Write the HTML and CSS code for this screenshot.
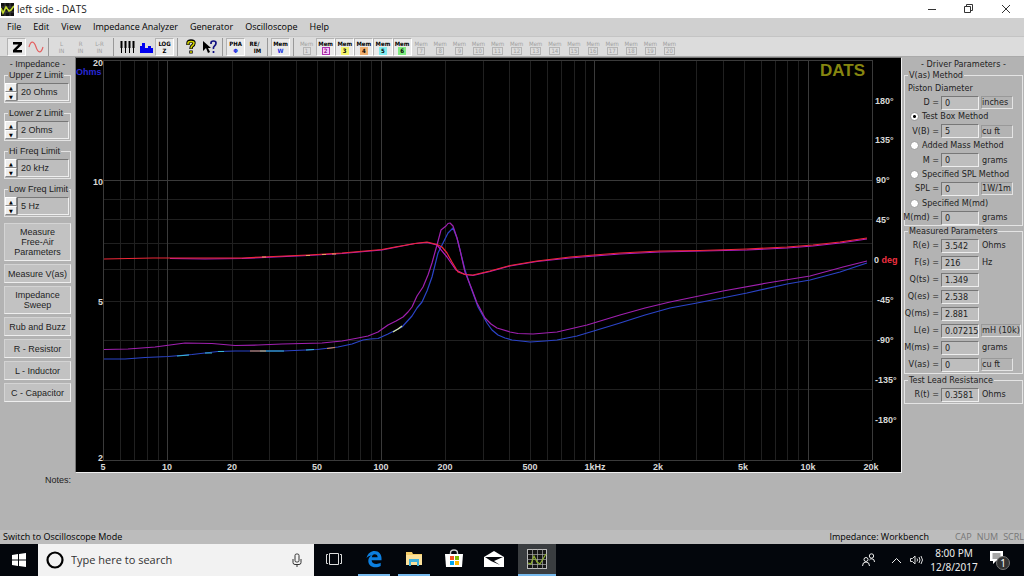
FILE: index.html
```html
<!DOCTYPE html>
<html lang="en">
<head>
<meta charset="utf-8">
<title>left side - DATS</title>
<link rel="stylesheet" href="styles.css">
</head>
<body>
<header class="titlebar">
  <svg class="app-icon" width="13" height="13" viewBox="0 0 13 13"><rect width="13" height="13" fill="#111"/><path d="M0 4h13M0 9h13M4 0v13M9 0v13" stroke="#444" stroke-width="1"/><path d="M0 5l2 5 3-6 3 4 2-1 3-4" fill="none" stroke="#c4dc30" stroke-width="1.6"/></svg>
  <h1 class="window-title">left side - DATS</h1>
  <div class="window-controls">
    <button aria-label="Minimize"><svg width="10" height="10" viewBox="0 0 10 10"><path d="M1 5.500h8" stroke="#333"/></svg></button>
    <button aria-label="Restore"><svg width="10" height="10" viewBox="0 0 10 10"><path d="M.5 2.500h6v6h-6zM2.500 2.500v-2h6v6h-2" fill="none" stroke="#333"/></svg></button>
    <button aria-label="Close"><svg width="10" height="10" viewBox="0 0 10 10"><path d="M1 1l8 8M9 1l-8 8" stroke="#333"/></svg></button>
  </div>
</header>
<nav class="menubar">
  <button>File</button><button>Edit</button><button>View</button><button>Impedance Analyzer</button><button>Generator</button><button>Oscilloscope</button><button>Help</button>
</nav>
<div class="toolbar">
  <div class="tool-group">
    <button class="tool pressed" aria-label="Impedance"><svg width="16" height="16" viewBox="0 0 16 16"><path d="M4 3h9v2.500L7.500 11H13v2.500H4V11l5.500-5.500H4z" fill="#000"/></svg></button>
    <button class="tool" aria-label="Oscilloscope"><svg width="16" height="16" viewBox="0 0 16 16"><path d="M1 8C3 1 6 2 8 8s5 7 7 0" fill="none" stroke="#e46060" stroke-width="1.200"/></svg></button>
  </div>
  <div class="tool-group inputs">
    <button class="tool off"><span>L</span><span>IN</span></button>
    <button class="tool off"><span>R</span><span>IN</span></button>
    <button class="tool off"><span>L-R</span><span>IN</span></button>
  </div>
  <div class="tool-group">
    <button class="tool" aria-label="Piano keys"><svg width="16" height="16" viewBox="0 0 16 16"><path d="M2.500 2v12M6.500 2v12M10.500 2v12M14.500 2v12" stroke="#000"/><path d="M2.500 2v7M6.500 2v7M10.500 2v7M14.500 2v7" stroke="#000" stroke-width="2"/></svg></button>
    <button class="tool" aria-label="Bars"><svg width="16" height="16" viewBox="0 0 16 16"><path d="M2 14V7h2V4h3v5h3V7h3v2h2v5z" fill="#0000f0"/></svg></button>
    <button class="tool pressed"><span>LOG</span><span>Z</span></button>
  </div>
  <div class="tool-group">
    <button class="tool" aria-label="Help"><svg width="16" height="16" viewBox="0 0 16 16"><path d="M5 6V4q0-2 3-2t3 2q0 2-2 3-1 1-1 3M8 11.500v3" fill="none" stroke="#000" stroke-width="3.400"/><path d="M5 5.500V4q0-1.500 3-1.500t3 1.500q0 2-2 3-1 1-1 2.500M8 12v2" fill="none" stroke="#d8d800" stroke-width="1.500"/></svg></button>
    <button class="tool" aria-label="Context help"><svg width="16" height="16" viewBox="0 0 16 16"><path d="M1 2v10l3-3 2 5 2-1-2-4h3z" fill="#000"/><path d="M9 5V4q0-2 2.500-2T14 4q0 2-1.500 3t-1 3M11.500 12v2" fill="none" stroke="#101080" stroke-width="1.700"/></svg></button>
  </div>
  <div class="tool-group">
    <button class="tool pressed"><span>PHA</span><span class="blue">Φ</span></button>
    <button class="tool"><span>RE/</span><span class="shift">IM</span></button>
  </div>
  <div class="tool-group">
    <button class="tool pressed"><span>Mem</span><span class="blue">W</span></button>
  </div>
  <div class="memories">
    <button class="tool off"><span>Mem</span><span class="slot">1</span></button>
    <button class="tool pressed"><span>Mem</span><span class="slot m2">2</span></button>
    <button class="tool pressed"><span>Mem</span><span class="slot m3">3</span></button>
    <button class="tool pressed"><span>Mem</span><span class="slot m4">4</span></button>
    <button class="tool pressed"><span>Mem</span><span class="slot m5">5</span></button>
    <button class="tool pressed"><span>Mem</span><span class="slot m6">6</span></button>
    <button class="tool off"><span>Mem</span><span class="slot">7</span></button>
    <button class="tool off"><span>Mem</span><span class="slot">8</span></button>
    <button class="tool off"><span>Mem</span><span class="slot">9</span></button>
    <button class="tool off"><span>Mem</span><span class="slot">10</span></button>
    <button class="tool off"><span>Mem</span><span class="slot">11</span></button>
    <button class="tool off"><span>Mem</span><span class="slot">12</span></button>
    <button class="tool off"><span>Mem</span><span class="slot">13</span></button>
    <button class="tool off"><span>Mem</span><span class="slot">14</span></button>
    <button class="tool off"><span>Mem</span><span class="slot">15</span></button>
    <button class="tool off"><span>Mem</span><span class="slot">16</span></button>
    <button class="tool off"><span>Mem</span><span class="slot">17</span></button>
    <button class="tool off"><span>Mem</span><span class="slot">18</span></button>
    <button class="tool off"><span>Mem</span><span class="slot">19</span></button>
    <button class="tool off"><span>Mem</span><span class="slot">20</span></button>
  </div>
</div>
<main class="workspace">
  <aside class="left-panel">
    <h2 class="panel-title">- Impedance -</h2>
    <div class="limits">
      <fieldset class="group"><legend><label for="upper">Upper Z Limit</label></legend><div class="spin"><div class="arrows"><button aria-label="Raise upper Z limit">▲</button><button aria-label="Lower upper Z limit">▼</button></div><input id="upper" class="field" value="20 Ohms"></div></fieldset>
      <fieldset class="group"><legend><label for="lower">Lower Z Limit</label></legend><div class="spin"><div class="arrows"><button aria-label="Raise lower Z limit">▲</button><button aria-label="Lower lower Z limit">▼</button></div><input id="lower" class="field" value="2 Ohms"></div></fieldset>
      <fieldset class="group"><legend><label for="hi">Hi Freq Limit</label></legend><div class="spin"><div class="arrows"><button aria-label="Raise high limit">▲</button><button aria-label="Lower high limit">▼</button></div><input id="hi" class="field" value="20 kHz"></div></fieldset>
      <fieldset class="group"><legend><label for="low">Low Freq Limit</label></legend><div class="spin"><div class="arrows"><button aria-label="Raise low limit">▲</button><button aria-label="Lower low limit">▼</button></div><input id="low" class="field" value="5 Hz"></div></fieldset>
    </div>
    <div class="actions">
      <button>Measure<br>Free-Air<br>Parameters</button>
      <button>Measure V(as)</button>
      <button>Impedance<br>Sweep</button>
      <button>Rub and Buzz</button>
      <button>R - Resistor</button>
      <button>L - Inductor</button>
      <button>C - Capacitor</button>
    </div>
  </aside>
  <section class="center">
    <svg class="chart" viewBox="76 58 825 414" role="img" aria-label="Impedance and phase against frequency">
      <rect x="76" y="58" width="825" height="414" fill="#000"/>
      <g class="grid">
        <path d="M120.500 60V460M134.500 60V460M147.500 60V460M158.500 60V460M232.500 60V460M269.500 60V460M296.500 60V460M317.500 60V460M334.500 60V460M348.500 60V460M360.500 60V460M371.500 60V460M445.500 60V460M483.500 60V460M509.500 60V460M530.500 60V460M547.500 60V460M561.500 60V460M574.500 60V460M585.500 60V460M659.500 60V460M696.500 60V460M723.500 60V460M744.500 60V460M761.500 60V460M775.500 60V460M787.500 60V460M798.500 60V460M103 199.500H872M103 219.500H872M103 243.500H872M103 269.500H872M103 301.500H872M103 340.500H872M103 389.500H872"/>
        <path class="major" d="M103.500 60V460M167.500 60V460M381.500 60V460M594.500 60V460M808.500 60V460M872.500 60V460M103 60.500H872M103 180.500H872M103 460.500H872"/>
      </g>
      <g class="curves">
        <polyline stroke="#2b44c8" points="104,359 125,359 145,357.500 168,356.500 192,354.500 218,351.500 235,351 283,351 317,349.500 338,347 352,344 363,340 370,339 378,338.500 388,334 402,327 412,316 417,308 422,302 427,291 432,277 438,253 443,243 448,233 453,228 457,238 465,270 470,285 478,307 487,323 492,330 498,335 505,338 512,340 530,342 545,341 557,340 577,336 597,330 620,323 645,315 670,308 697,303 747,293 787,284 810,280 840,272 867,263"/>
        <path stroke="#38b8d8" d="M177 356l12-1M205 353h7M218 351.500h6M260 351h24M306 350l8-.5"/><path stroke="#d89050" d="M250 351h16M327 348.500l8-1"/><path stroke="#d8e8a0" d="M393 332l5-3 4-3"/>
        <polyline stroke="#a020b0" points="104,349.500 128,349 155,347 170,345 185,343 212,343.500 235,345.500 258,345 282,344 322,343 342,341 358,338 368,336 378,332 388,325 396,321 403,317 408,312 412,307 417,296 423,287 428,275 432,263 437,245 441,230 446,226 448,223.500 450,223 453,226 457,238 460,250 465,272 471,287 477,303 485,318 491,324 497,328 510,332 518,333.500 533,334 557,332 587,325 620,315 645,308 670,302 723,291 767,283 810,276 843,267 867,261"/>
        <polyline stroke="#b01cc0" points="170,258.500 205,259 242,258.500 308,255.500 342,253.500 382,250 415,243.500 427,242.500 437,245 447,257 456,270 465,274.500 473,275.500 490,271.500 510,266 537,261.500 570,258 620,254 660,252 747,250 787,248 813,246 840,243 867,239"/>
        <polyline stroke="#ee2838" points="104,259 153,258 242,258 262,257 308,255 342,253 382,249.500 395,247 415,243.500 427,242 437,244.500 442,247 447,253 452,262 458,272 465,274.500 473,275 490,271 510,265.500 537,261 570,257 594,255 620,253 660,251 700,250.500 747,249 787,247 813,245 840,242 867,238"/>
        <path stroke="#e8a060" d="M262 257h4M306 255.500h4M322 254.500h4M332 254h4"/>
      </g>
      <g class="axis">
        <g text-anchor="end"><text x="103" y="66">20</text><text x="103" y="185">10</text><text x="103" y="305">5</text><text x="103" y="461">2</text></g>
        <text class="ohms" x="76" y="75">Ohms</text>
        <g text-anchor="middle"><text x="103" y="470">5</text><text x="167" y="470">10</text><text x="232" y="470">20</text><text x="317" y="470">50</text><text x="381" y="470">100</text><text x="445" y="470">200</text><text x="530" y="470">500</text><text x="595" y="470">1kHz</text><text x="658" y="470">2k</text><text x="743" y="470">5k</text><text x="808" y="470">10k</text><text x="871" y="470">20k</text></g>
        <text x="875" y="104">180°</text><text x="875" y="143">135°</text><text x="876" y="183">90°</text><text x="876" y="223">45°</text><text x="874" y="263">0 <tspan class="deg">deg</tspan></text><text x="877" y="303">-45°</text><text x="877" y="343">-90°</text><text x="875" y="383">-135°</text><text x="875" y="423">-180°</text>
        <text class="brand" x="820" y="76">DATS</text>
      </g>
    </svg>
  </section>
  <aside class="right-panel">
    <h2 class="panel-title">- Driver Parameters -</h2>
    <fieldset class="group">
      <legend>V(as) Method</legend>
      <div class="rows method">
        <div class="wide">Piston Diameter</div>
        <div class="row"><label for="d">D =</label><input id="d" class="field" value="0"><button class="unit">inches</button></div>
        <label class="wide radio"><input type="radio" name="m" checked>Test Box Method</label>
        <div class="row"><label for="vb">V(B) =</label><input id="vb" class="field" value="5"><button class="unit">cu ft</button></div>
        <label class="wide radio"><input type="radio" name="m">Added Mass Method</label>
        <div class="row"><label for="mm">M =</label><input id="mm" class="field" value="0"><span class="unit-text">grams</span></div>
        <label class="wide radio"><input type="radio" name="m">Specified SPL Method</label>
        <div class="row"><label for="spl">SPL =</label><input id="spl" class="field" value="0"><button class="unit">1W/1m</button></div>
        <label class="wide radio"><input type="radio" name="m">Specified M(md)</label>
        <div class="row"><label for="md">M(md) =</label><input id="md" class="field" value="0"><span class="unit-text">grams</span></div>
      </div>
    </fieldset>
    <fieldset class="group">
      <legend>Measured Parameters</legend>
      <div class="rows measured">
        <div class="row"><label for="re">R(e) =</label><input id="re" class="field" readonly value="3.542"><span class="unit-text">Ohms</span></div>
        <div class="row"><label for="fs">F(s) =</label><input id="fs" class="field" readonly value="216"><span class="unit-text">Hz</span></div>
        <div class="row"><label for="qts">Q(ts) =</label><input id="qts" class="field" readonly value="1.349"></div>
        <div class="row"><label for="qes">Q(es) =</label><input id="qes" class="field" readonly value="2.538"></div>
        <div class="row"><label for="qms">Q(ms) =</label><input id="qms" class="field" readonly value="2.881"></div>
        <div class="row"><label for="le">L(e) =</label><input id="le" class="field" readonly value="0.07215"><button class="unit">mH (10k)</button></div>
        <div class="row"><label for="mms">M(ms) =</label><input id="mms" class="field" readonly value="0"><span class="unit-text">grams</span></div>
        <div class="row"><label for="vas">V(as) =</label><input id="vas" class="field" readonly value="0"><button class="unit">cu ft</button></div>
      </div>
    </fieldset>
    <fieldset class="group test-lead">
      <legend>Test Lead Resistance</legend>
      <div class="rows lead">
        <div class="row"><label for="rt">R(t) =</label><input id="rt" class="field" readonly value="0.3581"><span class="unit-text">Ohms</span></div>
      </div>
    </fieldset>
  </aside>
</main>
<section class="notes">Notes:</section>
<footer class="statusbar">
  <span class="hint">Switch to Oscilloscope Mode</span>
  <span class="mode">Impedance: Workbench</span>
  <span class="keys"><span>CAP</span><span>NUM</span><span>SCRL</span></span>
</footer>
<div class="taskbar">
  <button class="start" aria-label="Start"><svg width="14" height="14" viewBox="0 0 14 14"><path d="M0 2l6-1v5.500H0zM7 .9L14 0v6.500H7zM0 7.500h6V13l-6-1zM7 7.500h7V14l-7-.9z" fill="#fff"/></svg></button>
  <div class="search">
    <svg width="18" height="18" viewBox="0 0 18 18"><circle cx="9" cy="9" r="7.500" fill="none" stroke="#000" stroke-width="2.200"/></svg>
    <input aria-label="Search" placeholder="Type here to search">
    <svg width="10" height="14" viewBox="0 0 10 14"><rect x="3" y="1" width="4" height="8" rx="1.500" fill="none" stroke="#333"/><path d="M1 6v3.500q0 2 2 2h4q2 0 2-2V6M5 11.500V14" fill="none" stroke="#333"/></svg>
  </div>
  <div class="apps">
    <button class="app" aria-label="Task view"><svg width="16" height="14" viewBox="0 0 16 14"><path d="M3.500 1.500h9v11h-9zM2 2.500H.5v9H2M14 2.500h1.500v9H14" fill="none" stroke="#ddd"/></svg></button>
    <button class="app running" aria-label="Edge"><svg width="18" height="18" viewBox="0 0 18 18"><path d="M1.500 8C3 3 6 1 9.500 1 14 1 16.500 4.500 16.500 8v2.200H6.600c.2 2.500 2.200 3.800 4.700 3.800 1.800 0 3.200-.5 4.400-1.200v3.200c-1.400.8-3.200 1.300-5.200 1.300-4.500 0-7.200-2.600-7.200-6.300 0-2.600 1.400-4.600 3.600-5.700C4.600 5.700 2.800 6.600 1.500 8zm5.300-.8h5.800c0-1.800-1-3-2.900-3-1.600 0-2.600 1.300-2.900 3z" fill="#0c7fe0"/></svg></button>
    <button class="app running" aria-label="File Explorer"><svg width="18" height="18" viewBox="0 0 18 18"><path d="M1 2h6l1 2h9v11H1z" fill="#f4cc68"/><path d="M1 5h16v10H1z" fill="#fbe09a"/><path d="M4 9h10v7h-2v-4H6v4H4z" fill="#3fb0dc"/></svg></button>
    <button class="app" aria-label="Store"><svg width="18" height="20" viewBox="0 0 18 20"><path d="M5.500 6V4q0-3 3.500-3t3.500 3v2" fill="none" stroke="#ccc" stroke-width="1.400"/><path d="M0 5h18l-1 13H1z" fill="#fff"/><path d="M5 7h4v4H5z" fill="#f25022"/><path d="M10 7h4v4h-4z" fill="#7fba00"/><path d="M5 12h4v4H5z" fill="#00a4ef"/><path d="M10 12h4v4h-4z" fill="#ffb900"/></svg></button>
    <button class="app" aria-label="Mail"><svg width="20" height="16" viewBox="0 0 20 16"><path d="M0 6l10-6 10 6v10H0z" fill="#fff"/><path d="M1 6h18l-9 4 6 4-9-4z" fill="#05070c"/></svg></button>
    <button class="app active" aria-label="DATS"><svg width="20" height="20" viewBox="0 0 20 20"><rect x=".5" y=".5" width="19" height="19" fill="#151515" stroke="#bbb"/><path d="M5.500 0v20M10.500 0v20M15.500 0v20M0 5.500h20M0 10.500h20M0 15.500h20" stroke="#aaa" stroke-width=".7"/><path d="M1 14l3 1 3-8 3 6 3 2 3-5 3-5" fill="none" stroke="#8fb030" stroke-width="1.200"/></svg></button>
  </div>
  <div class="tray">
    <button class="people" aria-label="People"><svg width="13" height="14" viewBox="0 0 13 14"><circle cx="4" cy="6.500" r="2" fill="none" stroke="#eee"/><path d="M.5 13q0-4 3.500-4t3.500 4M7.500 7q1-1.500 2.500-1.200 2.500.2 2.500 3.200" fill="none" stroke="#eee"/><circle cx="9.500" cy="3" r="2.200" fill="none" stroke="#eee"/></svg></button>
    <button aria-label="Show hidden icons"><svg width="11" height="7" viewBox="0 0 11 7"><path d="M1 6l4.500-4.500L10 6" fill="none" stroke="#eee"/></svg></button>
    <button aria-label="Volume"><svg width="13" height="10" viewBox="0 0 13 10"><path d="M.5 3.500h2l2.500-2.500v8L2.500 6.500h-2zM7 3.500q1 1.500 0 3M9 2q2 3 0 6M11 1q3 4 0 8" fill="none" stroke="#ddd"/></svg></button>
    <div class="clock"><span>8:00 PM</span><span>12/8/2017</span></div>
    <button class="alerts" aria-label="Notifications"><svg width="20" height="20" viewBox="0 0 20 20"><path d="M0 1h13v10H6l-3 3v-3H0z" fill="#fff"/><path d="M2.500 4h8M2.500 6h8M2.500 8h8" stroke="#222" stroke-width=".8"/><circle cx="13" cy="13" r="6.500" fill="#333" stroke="#777"/><text x="13" y="17" text-anchor="middle">1</text></svg></button>
  </div>
</div>
</body>
</html>
```
FILE: styles.css
```css
* { box-sizing: border-box; }
body {
  margin: 0;
  min-height: 100vh;
  display: flex;
  flex-direction: column;
  background: #b3b3b3;
  color: #222;
  font: 9px/11px "DejaVu Sans Condensed", "DejaVu Sans", sans-serif;
}
button { margin: 0; padding: 0; border: 0; background: none; color: inherit; font: inherit; }
svg { display: block; }
h1, h2 { margin: 0; font: inherit; }

.titlebar { display: flex; align-items: center; height: 18px; padding-left: 1px; gap: 3px; background: #fff; }
.window-title { flex: 1; font: 10px/18px "Open Sans", sans-serif; color: #222; }
.window-controls { display: flex; }
.window-controls button { display: grid; place-items: center; width: 37px; height: 18px; }

.menubar { display: flex; align-items: center; gap: 12px; height: 18px; padding-left: 7px; background: #d0d0d0; font: 9px/18px "Open Sans", sans-serif; color: #000; }

.toolbar { display: flex; align-items: stretch; height: 21px; padding: 1px 0 0 7px; background: #dcdcdc; border-top: 1px solid #c4c4c4; border-bottom: 1px solid #aaa; }
.tool-group { display: flex; padding-right: 3px; margin-right: 3px; border-right: 1px solid #999; }
.inputs { padding-right: 4px; }
.memories { display: grid; grid-template-columns: repeat(20, 1fr); width: 382px; }
.tool { display: flex; flex-direction: column; align-items: center; justify-content: center; min-width: 19px; font: bold 6px/7px "DejaVu Sans Condensed", sans-serif; color: #000; }
.pressed { background: #eaeaea; border: 1px solid; border-color: #b4b4b4 #fff #fff #b4b4b4; }
.off { color: #a0a0a0; font-weight: normal; }
.blue { color: #2030e0; }
.shift { padding-left: 6px; }
.slot { padding: 0 1px; border: 1px solid #b4b4b4; line-height: 6px; min-width: 8px; text-align: center; }
.m2 { background: #f8c8f8; border-color: #b030b0; color: #902090; }
.m3 { background: #f4f46c; border-color: #f4f46c; }
.m4 { background: #f0b070; border-color: #f0b070; }
.m5 { background: #80ecf0; border-color: #80ecf0; }
.m6 { background: #80ec80; border-color: #80ec80; }

.workspace { display: grid; grid-template-columns: 75px minmax(0, 1fr) 122px; align-items: start; }
.panel-title { text-align: center; line-height: 12px; }
.left-panel { padding: 1px 4px 0; font-family: "Liberation Sans", Arial, sans-serif; }
.limits { display: flex; flex-direction: column; gap: 5px; }
.spin { display: flex; height: 21px; padding: 2px 1px 1px 0; }
.arrows { display: grid; grid-template-rows: 1fr 1fr; flex: 0 0 12px; }
.arrows button { background: #eee; border: 1px solid; border-color: #fff #888 #888 #fff; font: 5px/6px "DejaVu Sans", sans-serif; color: #000; }
.field { width: 100%; min-width: 0; margin: 0; padding: 0 0 0 3px; border: 1px solid; border-color: #777 #eee #eee #777; border-radius: 0; background: #bebebe; color: #222; font: inherit; }
.actions { display: flex; flex-direction: column; gap: 3px; padding-top: 6px; }
.actions button { min-height: 19px; padding: 3px 0; line-height: 10px; background: #c2c2c2; border: 1px solid; border-color: #d4d4d4 #eee #eee #d4d4d4; }

.center { border: 1px solid #eee; border-top-color: #777; border-left-color: #777; }
.chart { width: 100%; height: auto; }
.grid path { fill: none; stroke: #202020; shape-rendering: crispEdges; }
.grid .major { stroke: #3a3a3a; }
.curves * { fill: none; stroke-width: 1.2; stroke-linejoin: round; }
.axis { font: bold 9px "Liberation Sans", Arial, sans-serif; fill: #d8d8d8; }
.axis .ohms { fill: #2828d8; }
.axis .deg { fill: #f03040; }
.axis .brand { font-size: 17px; fill: #868610; }

.right-panel { padding: 1px 1px 0 2px; }
.group { margin: 0; padding: 0; min-width: 0; border: 1px solid #e4e4e4; }
.group legend { margin-left: 3px; padding: 0 1px; line-height: 11px; white-space: nowrap; }
.rows { display: grid; grid-auto-rows: 1fr; align-items: center; }
.method { min-height: 144px; }
.measured { min-height: 136px; }
.lead { min-height: 17px; }
.test-lead { margin-top: 1px; }
.row { display: grid; grid-template-columns: 34px 38px 1fr; column-gap: 2px; align-items: center; white-space: nowrap; }
.row label { justify-self: end; }
.row .field { height: 14px; }
.wide { padding-left: 3px; white-space: nowrap; }
.radio { display: flex; align-items: center; gap: 3px; padding-left: 5px; }
.radio input { appearance: none; width: 9px; height: 9px; margin: 0; border: 1px solid #999; border-radius: 50%; background: #fff; }
.radio input:checked { background: radial-gradient(circle, #000 0 1px, #fff 2px); }
.unit { justify-self: start; min-width: 32px; height: 13px; padding: 0; text-align: left; border: 1px solid; border-color: #999 #e4e4e4 #e4e4e4 #999; }
.unit-text { padding-left: 1px; }

.notes { flex: 1; padding: 2px 0 0 45px; font-family: "Liberation Sans", Arial, sans-serif; }

.statusbar { display: flex; align-items: center; height: 14px; padding-left: 3px; background: #bcbcbc; font: 9px/14px "Open Sans", sans-serif; color: #000; }
.hint { flex: 1; }
.mode { padding-right: 26px; }
.keys { display: flex; gap: 5px; color: #777; }

.taskbar { display: flex; align-items: stretch; height: 32px; background: #03060c; color: #eee; font: 10px/14px "Noto Sans", sans-serif; }
.start { display: grid; place-items: center; width: 38px; }
.search { display: flex; align-items: center; flex: 0 1 276px; gap: 7px; padding: 0 12px 0 8px; background: #f2f2f2; }
.search input { flex: 1; min-width: 0; padding: 0; border: 0; background: none; font: 11px/16px "Open Sans", sans-serif; }
.search input::placeholder { color: #333; opacity: 1; }
.apps { display: flex; gap: 8px; flex: 1; padding-left: 4px; }
.app { display: grid; place-items: center; width: 32px; border-bottom: 2px solid transparent; }
.running { border-color: #76b9ed; }
.active { width: 38px; background: #3a3d40; border-color: #76b9ed; }
.tray { display: flex; align-items: center; gap: 8px; padding-right: 14px; }
.tray button { display: grid; place-items: center; }
.tray .people { margin-right: 8px; }
.clock { display: flex; flex-direction: column; align-items: center; width: 46px; margin-right: 5px; }
.alerts text { font: 10px "Noto Sans", sans-serif; fill: #fff; }
```
